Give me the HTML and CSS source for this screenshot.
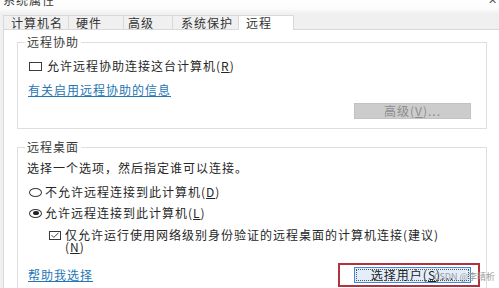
FILE: index.html
```html
<!DOCTYPE html>
<html lang="zh-CN">
<head>
<meta charset="utf-8">
<title>系统属性</title>
<link rel="stylesheet" href="styles.css">
</head>
<body>
<div class="titlebar"><span class="title">系统属性</span><span class="close">✕</span></div>
<div class="tabs">
  <div class="tab t1">计算机名</div>
  <div class="tab t2">硬件</div>
  <div class="tab t3">高级</div>
  <div class="tab t4">系统保护</div>
  <div class="tab t5 active">远程</div>
</div>
<div class="page">
  <fieldset class="group g1">
    <legend>远程协助</legend>
    <div class="opt"><span class="box"></span><span>允许远程协助连接这台计算机(<u>R</u>)</span></div>
    <a class="link link-info">有关启用远程协助的信息</a>
    <div class="btn-row"><button class="btn btn-disabled">高级(<u>V</u>)...</button></div>
  </fieldset>
  <fieldset class="group g2">
    <legend>远程桌面</legend>
    <div class="desc">选择一个选项，然后指定谁可以连接。</div>
    <div class="opt radio-row r1"><span class="radio"></span><span>不允许远程连接到此计算机(<u>D</u>)</span></div>
    <div class="opt radio-row r2"><span class="radio checked"></span><span>允许远程连接到此计算机(<u>L</u>)</span></div>
    <div class="opt nested"><span class="box small"><svg viewBox="0 0 12 9" width="10" height="7"><polyline points="1.5,4 4.5,7 10.5,1" fill="none" stroke="#333" stroke-width="1.2"/></svg></span><span>仅允许运行使用网络级别身份验证的远程桌面的计算机连接(建议)<br>(<u>N</u>)</span></div>
    <div class="bottom-row">
      <a class="link">帮助我选择</a>
      <span class="pick"><button class="btn btn-primary">选择用户(<u>S</u>)...</button></span>
    </div>
  </fieldset>
</div>
<div class="watermark">CSDN @李晴析</div>
</body>
</html>
```
FILE: styles.css
```css
* { box-sizing: border-box; }
html, body { margin: 0; }
body {
  width: 499px;
  height: 288px;
  overflow: hidden;
  position: relative;
  background: #f0f0f0;
  font-family: "Noto Sans CJK SC", "Noto Sans", sans-serif;
  font-size: 12px;
  line-height: 12px;
  letter-spacing: 1px;
  color: #262626;
}
u { text-decoration: underline; text-underline-offset: 1px; }

.titlebar {
  height: 15px;
  padding-left: 3px;
  display: flex;
  justify-content: space-between;
  overflow: hidden;
  background: linear-gradient(#ffffff 0, #fbfbfb 9px, #f0f0f0 14px);
}
.title { margin-top: -6px; color: #3a3a3a; }
.close { margin-top: -7px; font-size: 11px; color: #555; padding-right: 1px; }

.tabs {
  display: flex;
  align-items: flex-end;
  height: 14px;
  padding-left: 3px;
}
.tab {
  height: 14px;
  padding-left: 7px;
  line-height: 13px;
  border: 1px solid #d9d9d9;
  border-right: none;
  border-bottom: none;
  background: #f0f0f0;
  color: #333;
  white-space: nowrap;
}
.tab.active {
  height: 15px;
  margin-bottom: -1px;
  background: #fff;
  border-right: 1px solid #d9d9d9;
  position: relative;
}
.t1 { width: 65px; }
.t2 { width: 55px; }
.t3 { width: 49px; padding-left: 4px; }
.t4 { width: 66px; padding-left: 8px; }
.t5 { width: 56px; padding-left: 7px; }

.page {
  height: 259px;
  margin-left: 3px;
  background: #fff;
  border-top: 1px solid #d9d9d9;
  border-left: 1px solid #d9d9d9;
  overflow: hidden;
}

.group {
  min-width: 0;
  margin: 6px 12px 0 13px;
  padding: 12px 15px 9px 10px;
  border: 1px solid #dedede;
}
.group legend {
  padding: 0 2px;
  margin-left: -3px;
  line-height: 12px;
  color: #3a3a3a;
}
.g2 { margin-top: 12px; padding-top: 9px; padding-bottom: 12px; }

.opt { display: flex; align-items: center; white-space: nowrap; }
.box {
  width: 13px;
  height: 9px;
  margin-left: 1px;
  margin-right: 5px;
  border: 1px solid #3a3a3a;
  flex: none;
}
.radio {
  width: 13px;
  height: 9px;
  margin-left: 1px;
  margin-right: 3px;
  border: 1px solid #3a3a3a;
  border-radius: 50%;
  flex: none;
  display: flex;
  align-items: center;
  justify-content: center;
}
.radio.checked::before {
  content: "";
  width: 6px;
  height: 4px;
  border-radius: 50%;
  background: #222;
}
.r1 { margin-top: 12px; }
.r2 { margin-top: 9px; }
.nested {
  margin-top: 10px;
  margin-left: 20px;
  align-items: flex-start;
}
.box.small {
  width: 12px;
  margin-top: 2px;
  margin-right: 4px;
  display: flex;
  align-items: center;
  justify-content: center;
}

.link {
  display: block;
  width: fit-content;
  color: #2476b4;
  text-decoration: underline;
  text-underline-offset: 1px;
}
.link-info { margin-top: 12px; }

.btn-row { display: flex; justify-content: flex-end; margin-top: 7px; }
.btn {
  width: 117px;
  height: 16px;
  padding: 0;
  font: inherit;
  letter-spacing: 1px;
  line-height: 14px;
}
.btn-disabled {
  background: #cccccc;
  border: 1px solid #c2c2c2;
  color: #8c8c8c;
}
.btn-primary {
  background: #e3eefa;
  border: 1px solid #3d8ad6;
  outline: 1px dotted #555;
  outline-offset: -3px;
  color: #222;
}

.desc { white-space: nowrap; margin-left: -1px; }
.bottom-row {
  margin-top: 14px;
  display: flex;
  justify-content: space-between;
  align-items: center;
}
.pick { position: relative; display: block; height: 16px; }
.pick::after {
  content: "";
  position: absolute;
  left: -16px;
  right: -9px;
  top: -4px;
  bottom: -4px;
  border: 2px solid #b3323d;
  pointer-events: none;
}

.watermark {
  position: absolute;
  right: 4px;
  top: 272px;
  font-size: 9px;
  line-height: 10px;
  letter-spacing: 0;
  color: #9a9a9a;
}
```
